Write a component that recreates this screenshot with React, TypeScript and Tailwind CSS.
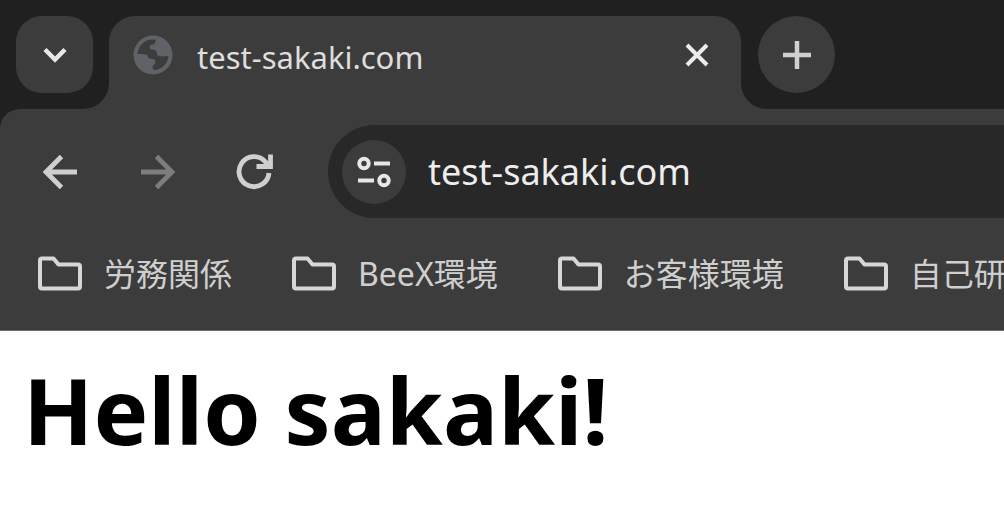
import React from 'react';

const bookmarks = ['労務関係', 'BeeX環境', 'お客様環境', '自己研'];

const GlobeIcon: React.FC = () => (
  <svg className="w-10 h-10 shrink-0" viewBox="0 0 40 40" aria-hidden="true">
    <circle cx="20" cy="20" r="19.5" fill="#5f6368" />
    <path
      d="M4.5 19C5 11 11.5 4.800 18 4.400H22.500C23 7.500 21.500 9.500 17.500 10C16.500 11.500 16.500 13.500 18 14.500C22 14 24 16 24 19.500C25 21.500 28 21.500 35.500 21C35 28 30 33.500 22 35.300C19.500 34.500 19 32 20 30.500C22.500 29.500 23 26 21.500 24.500C18.500 23.500 14.500 24.500 14.500 20C12 19 8 19.500 4.500 19Z"
      fill="#3c3c3c"
    />
  </svg>
);

const FolderIcon: React.FC = () => (
  <svg className="w-11 h-9 shrink-0" viewBox="0 0 44 36" fill="none" aria-hidden="true">
    <path
      d="M4 2.500H15.500L20.500 8.500H40Q42 8.500 42 10.500V30.500Q42 32.500 40 32.500H4Q2 32.500 2 30.500V4.500Q2 2.500 4 2.500Z"
      stroke="#d6d6d6"
      strokeWidth="4"
      strokeLinejoin="round"
    />
  </svg>
);

const TabStrip: React.FC = () => (
  <div className="flex items-start pt-4 pl-4 bg-[#202020]">
    <button
      className="flex items-center justify-center w-[77px] h-[77px] mr-4 rounded-[26px] bg-[#3c3c3c] text-[#e8e8e8]"
      aria-label="Search tabs"
    >
      <svg className="w-6 h-4" viewBox="0 0 24 16" fill="none" stroke="currentColor" strokeWidth="4.500">
        <path d="M2 2.500L12 12.500L22 2.500" />
      </svg>
    </button>
    <div className="relative flex items-start justify-between w-[64%] h-[93px] pt-4 pl-6 pr-8 rounded-t-[26px] bg-[#3c3c3c]">
      <svg className="absolute bottom-0 right-full w-[26px] h-[26px]" viewBox="0 0 26 26" fill="#3c3c3c">
        <path d="M26 0V26H0A26 26 0 0 0 26 0Z" />
      </svg>
      <svg className="absolute bottom-0 left-full w-[26px] h-[26px]" viewBox="0 0 26 26" fill="#3c3c3c">
        <path d="M0 0V26H26A26 26 0 0 1 0 0Z" />
      </svg>
      <div className="flex items-start gap-6 pt-[3px]">
        <GlobeIcon />
        <span className="text-[31px] leading-[44px] text-[#dedede]">test-sakaki.com</span>
      </div>
      <button className="flex items-center justify-center w-6 h-[77px] -mt-4 text-[#ececec]" aria-label="Close tab">
        <svg className="w-6 h-6" viewBox="0 0 24 24" fill="none" stroke="currentColor" strokeWidth="4">
          <path d="M2 2L22 22M22 2L2 22" />
        </svg>
      </button>
    </div>
    <button
      className="flex items-center justify-center w-[77px] h-[77px] ml-[17px] rounded-full bg-[#3c3c3c] text-[#d0d0d0]"
      aria-label="New tab"
    >
      <svg className="w-7 h-7" viewBox="0 0 28 28" fill="none" stroke="currentColor" strokeWidth="4.500">
        <path d="M14 0V28M0 14H28" />
      </svg>
    </button>
  </div>
);

const Toolbar: React.FC = () => (
  <div className="bg-[#202020]">
    <div className="flex items-center pt-4 pl-10 rounded-tl-[20px] bg-[#3c3c3c] text-[#cfcfcf]">
      <div className="flex items-center gap-[58px]">
        <button aria-label="Back">
          <svg className="w-10 h-10" viewBox="0 0 40 40" fill="none" stroke="currentColor" strokeWidth="4.800">
            <path d="M37 20H6M21.500 4.500L6 20L21.500 35.500" />
          </svg>
        </button>
        <button className="text-[#7d7d7d]" aria-label="Forward">
          <svg className="w-10 h-10" viewBox="0 0 40 40" fill="none" stroke="currentColor" strokeWidth="4.800">
            <path d="M3 20H34M18.500 4.500L34 20L18.500 35.500" />
          </svg>
        </button>
        <button aria-label="Reload">
          <svg className="w-10 h-10" viewBox="0 0 40 40" fill="none" stroke="currentColor" strokeWidth="4.800">
            <path d="M31.500 21.500A15 15 0 1 1 28 10.500L33 15" transform="translate(1.500 -.5)" />
            <path d="M34.500 2.500V14.500H20.500" />
          </svg>
        </button>
      </div>
      <div className="flex flex-1 items-center min-w-0 h-[93px] ml-[52px] pl-[14px] rounded-l-full bg-[#282828]">
        <button
          className="flex items-center justify-center w-16 h-16 shrink-0 rounded-full bg-[#3c3c3c] text-[#e8e8e8]"
          aria-label="View site information"
        >
          <svg className="w-[34px] h-8" viewBox="0 0 34 32" fill="none" stroke="currentColor" strokeWidth="4">
            <circle cx="7" cy="7.500" r="4.700" />
            <path d="M17 7.500H33M1 24.500H17" />
            <circle cx="27" cy="24.500" r="4.700" />
          </svg>
        </button>
        <input
          className="flex-1 min-w-0 ml-[22px] text-[36px] leading-[48px] bg-transparent outline-none text-[#ededed]"
          aria-label="Address"
          defaultValue="test-sakaki.com"
        />
      </div>
    </div>
  </div>
);

const BookmarksBar: React.FC = () => (
  <nav className="flex gap-[60px] pt-8 pb-8 pl-[38px] overflow-hidden bg-[#3c3c3c] border-b border-[#6a6a6a]">
    {bookmarks.map((name) => (
      <a key={name} href="#" className="flex items-center gap-[22px] shrink-0 text-[32px] leading-[48px] text-[#cfcfcf]">
        <FolderIcon />
        {name}
      </a>
    ))}
  </nav>
);

export default function App() {
  return (
    <div className="min-h-screen overflow-hidden bg-white font-['Noto_Sans','Noto_Sans_CJK_JP',sans-serif]">
      <header>
        <TabStrip />
        <Toolbar />
        <BookmarksBar />
      </header>
      <main className="px-[23px] py-[21px]">
        <h1 className="text-[92px] leading-[116px] font-bold text-black">Hello sakaki!</h1>
      </main>
    </div>
  );
}
